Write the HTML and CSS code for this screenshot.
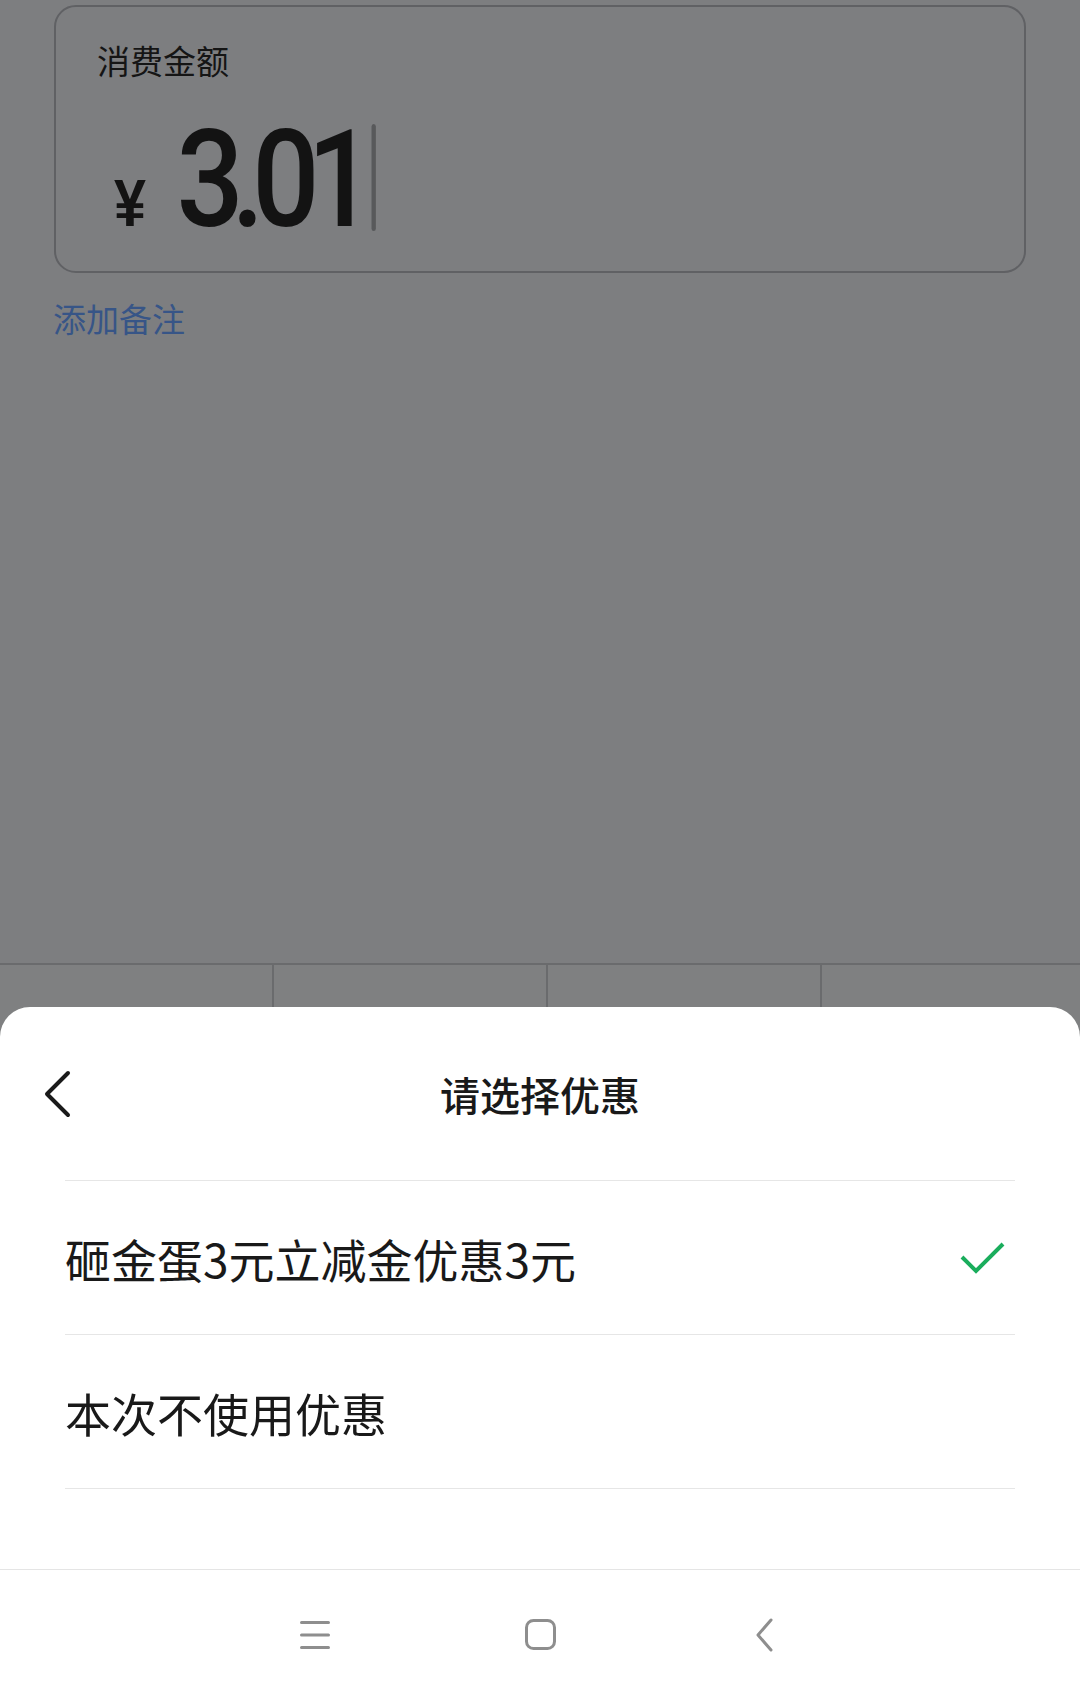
FILE: index.html
```html
<!DOCTYPE html>
<html lang="zh-CN">
<head>
    <meta charset="UTF-8">
    <meta name="viewport" content="width=device-width, initial-scale=1.0">
    <title>付款</title>
    <link rel="stylesheet" href="styles.css">
</head>
<body>
    <!-- page behind the sheet, shown dimmed -->
    <div class="page">
        <div class="amount-card">
            <div class="amount-label">消费金额</div>
            <div class="amount-row">
                <span class="currency">¥</span>
                <span class="amount-value">3.01</span>
                <span class="caret"></span>
            </div>
        </div>
        <a class="remark-link" href="#">添加备注</a>

        <div class="keypad">
            <div class="key"></div>
            <div class="key"></div>
            <div class="key"></div>
            <div class="key"></div>
        </div>
    </div>

    <!-- discount picker sheet -->
    <div class="sheet">
        <div class="sheet-header">
            <a class="back-btn" href="#">
                <svg width="32" height="48" viewBox="0 0 32 48">
                    <path d="M26 3 L5 24 L26 45" fill="none" stroke="#1a1a1a" stroke-width="4" stroke-linecap="round" stroke-linejoin="round"/>
                </svg>
            </a>
            <div class="sheet-title">请选择优惠</div>
            <div></div>
        </div>

        <div class="option-list">
            <div class="option selected">
                <span>砸金蛋3元立减金优惠3元</span>
                <svg class="check" width="46" height="34" viewBox="0 0 46 34">
                    <polyline points="2,16 16,30 43,3" fill="none" stroke="#1aad5c" stroke-width="4"/>
                </svg>
            </div>
            <div class="option">
                <span>本次不使用优惠</span>
            </div>
        </div>

        <div class="nav-bar">
            <div class="nav-btn">
                <svg width="30" height="28" viewBox="0 0 30 28">
                    <path d="M1.5 1.5 H28.5 M1.5 14 H28.5 M1.5 26.5 H28.5" stroke="#8e8e8e" stroke-width="3" stroke-linecap="round"/>
                </svg>
            </div>
            <div class="nav-btn">
                <svg width="31" height="31" viewBox="0 0 31 31">
                    <rect x="1.5" y="1.5" width="28" height="28" rx="7" fill="none" stroke="#8e8e8e" stroke-width="3"/>
                </svg>
            </div>
            <div class="nav-btn">
                <svg width="20" height="34" viewBox="0 0 20 34">
                    <path d="M16 2 L3 17 L16 32" fill="none" stroke="#8e8e8e" stroke-width="3" stroke-linecap="round" stroke-linejoin="round"/>
                </svg>
            </div>
        </div>
    </div>
</body>
</html>
```

FILE: styles.css
```css
body {
    margin: 0;
    width: 1080px;
    height: 1699px;
    overflow: hidden;
    font-family: "Noto Sans CJK SC", "Noto Sans", sans-serif;
}
.page {
    height: 1699px;
    box-sizing: border-box;
    padding-top: 5px;
    background-color: #7d7e80;
    display: flex;
    flex-direction: column;
}
.amount-card {
    margin: 0 54px;
    border: 2px solid #606164;
    border-radius: 22px;
    padding: 37px 0 24px 41px;
}
.amount-label {
    font-size: 33px;
    line-height: 32px;
    color: #151515;
}
.amount-row {
    display: flex;
    align-items: baseline;
    height: 135px;
    margin: 36px 0 0 17px;
    transform: scaleX(0.87); /* the amount font is a narrow one */
    transform-origin: left center;
    color: #131313;
}
.currency {
    font: 700 66px/1 "Liberation Sans", Arial, sans-serif;
}
.amount-value {
    margin-left: 35px;
    font: 500 136px/135px Roboto, "Liberation Sans", sans-serif;
    letter-spacing: -14px;
}
.caret {
    width: 5px;
    height: 107px;
    margin-left: 11px;
    border-radius: 3px;
    background-color: #58595b;
    transform: translateY(5px);
}
.remark-link {
    align-self: flex-start;
    margin: 29px 0 0 53px;
    font-size: 33px;
    line-height: 32px;
    color: #375587;
    text-decoration: none;
}
.keypad {
    margin-top: auto;
    height: 734px;
    border-top: 2px solid #6a6b6d;
    display: grid;
    grid-template-columns: 272px 274px 274px 1fr;
    background-color: #7f8081;
}
.key + .key {
    border-left: 2px solid #6a6b6d;
}
/* bottom sheet */
.sheet {
    position: fixed;
    left: 0;
    right: 0;
    bottom: 0;
    height: 692px;
    background-color: #fff;
    border-radius: 30px 30px 0 0;
    display: flex;
    flex-direction: column;
}
.sheet-header {
    height: 173px;
    display: grid;
    grid-template-columns: 120px 1fr 120px;
    align-items: center;
}
.back-btn svg {
    display: block;
    margin-left: 42px;
}
.sheet-title {
    text-align: center;
    font-size: 40px;
    line-height: 40px;
    font-weight: 500;
    color: #191919;
}
.option-list {
    margin: 0 65px;
    border-bottom: 1px solid #e6e6e6;
}
.option {
    height: 153px;
    border-top: 1px solid #e6e6e6;
    display: flex;
    align-items: center;
    justify-content: space-between;
    font-size: 46px;
    color: #191919;
}
.check {
    display: block;
    margin-right: 9px;
}
.nav-bar {
    margin-top: auto;
    height: 129px;
    border-top: 1px solid #e5e5e5;
    display: flex;
    justify-content: center;
    align-items: center;
}
.nav-btn {
    width: 225px;
    display: flex;
    justify-content: center;
}
.nav-btn svg {
    display: block;
}
```
